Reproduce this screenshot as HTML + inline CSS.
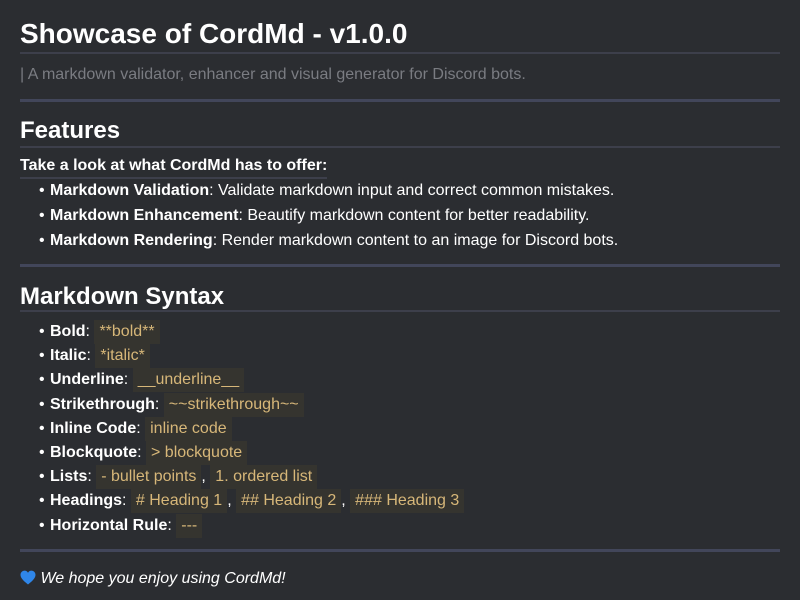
<!DOCTYPE html>
<html><head><style>
body{margin:0;width:800px;height:600px;background:#2b2d31;font-family:"Liberation Sans",Arial,Helvetica,sans-serif;color:#fff;position:relative;overflow:hidden}
.a{position:absolute;white-space:nowrap}
.hr1{position:absolute;left:20px;width:760px;height:2px;background:#3d3f4b}
.hr3{position:absolute;left:20px;width:760px;height:3px;background:#42465a}
ul{position:absolute;left:0;margin:0;padding:0;list-style:none}
li{position:relative;padding-left:50px;font-size:16px;height:24.2px;line-height:18px;white-space:nowrap}
li:before{content:"•";position:absolute;left:39px;top:0}
code{font-family:"Liberation Sans",Arial,sans-serif;background:#35342f;color:#d7b779;padding:3px 5px 4px;font-size:16px}
.f li{height:25px}
</style></head><body>
<div class="a" style="left:20px;top:18px;font-size:28px;font-weight:bold;line-height:32px">Showcase of CordMd - v1.0.0</div>
<div class="hr1" style="top:52px"></div>
<div class="a" style="left:20px;top:66px;font-size:16px;color:#7a7c82;line-height:18px">| A markdown validator, enhancer and visual generator for Discord bots.</div>
<div class="hr3" style="top:99px"></div>
<div class="a" style="left:20px;top:117px;font-size:24px;font-weight:bold;line-height:28px">Features</div>
<div class="hr1" style="top:146px"></div>
<div class="a" style="left:20px;top:157px;font-size:16px;font-weight:bold;line-height:18px;padding-bottom:2px;border-bottom:2px solid #3d3f4b">Take a look at what CordMd has to offer:</div>
<ul class="f" style="top:182px">
<li><b>Markdown Validation</b>: Validate markdown input and correct common mistakes.</li>
<li><b>Markdown Enhancement</b>: Beautify markdown content for better readability.</li>
<li><b>Markdown Rendering</b>: Render markdown content to an image for Discord bots.</li>
</ul>
<div class="hr3" style="top:264px"></div>
<div class="a" style="left:20px;top:283px;font-size:24px;font-weight:bold;line-height:28px">Markdown Syntax</div>
<div class="hr1" style="top:310px"></div>
<ul style="top:323px">
<li><b>Bold</b>: <code>**bold**</code></li>
<li><b>Italic</b>: <code>*italic*</code></li>
<li><b>Underline</b>: <code>__underline__</code></li>
<li><b>Strikethrough</b>: <code>~~strikethrough~~</code></li>
<li><b>Inline Code</b>: <code>inline code</code></li>
<li><b>Blockquote</b>: <code>&gt; blockquote</code></li>
<li><b>Lists</b>: <code>- bullet points</code>, <code>1. ordered list</code></li>
<li><b>Headings</b>: <code># Heading 1</code>, <code>## Heading 2</code>, <code>### Heading 3</code></li>
<li><b>Horizontal Rule</b>: <code>---</code></li>
</ul>
<div class="hr3" style="top:549px"></div>
<div class="a" style="left:20px;top:570px;font-size:16px;font-style:italic;line-height:18px"><svg width="16" height="15" viewBox="0 0 16 15" style="vertical-align:-2px"><path d="M8 14.5C3 10.5 0.5 8 0.5 4.8 0.5 2.4 2.3 0.6 4.5 0.6 6 0.6 7.3 1.4 8 2.7 8.7 1.4 10 0.6 11.5 0.6 13.7 0.6 15.5 2.4 15.5 4.8 15.5 8 13 10.5 8 14.5Z" fill="#2f86e8"/></svg> We hope you enjoy using CordMd!</div>
</body></html>
